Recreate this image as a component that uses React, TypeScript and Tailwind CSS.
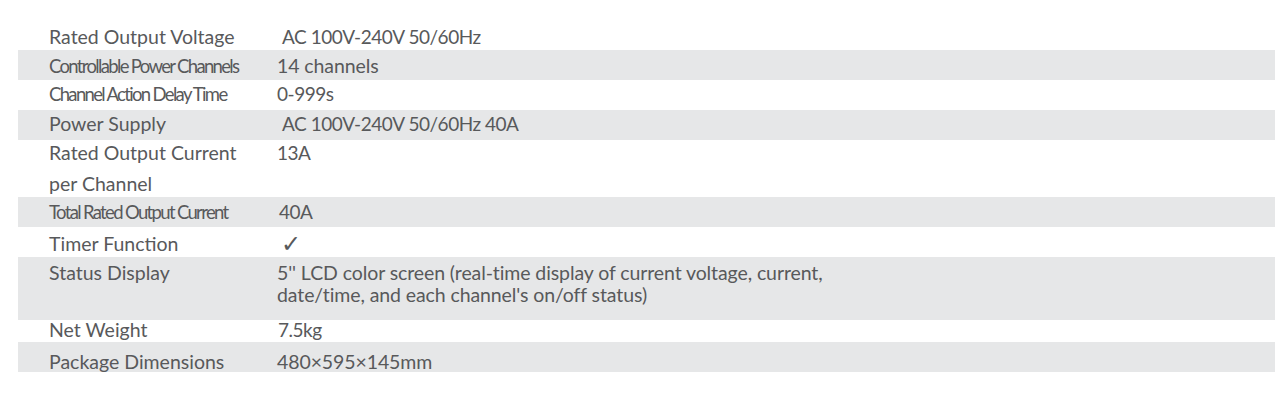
import React from "react";

type Row = {
  label: React.ReactNode;
  value: React.ReactNode;
  gray: boolean;
  h: string;
  pt: string;
  lh?: string;
  condensed?: boolean;
  vpad?: string;
  wide?: boolean;
};

const rows: Row[] = [
  { label: "Rated Output Voltage", value: "AC 100V-240V 50/60Hz", gray: false, h: "h-[30px]", pt: "pt-[5px]", vpad: "pl-[5px]" },
  { label: "Controllable Power Channels", value: "14 channels", gray: true, h: "h-[30px]", pt: "pt-[4px]", condensed: true, wide: true },
  { label: "Channel Action Delay Time", value: "0-999s", gray: false, h: "h-[30px]", pt: "pt-[2px]", condensed: true },
  { label: "Power Supply", value: "AC 100V-240V 50/60Hz 40A", gray: true, h: "h-[30px]", pt: "pt-[2px]", vpad: "pl-[5px]" },
  {
    label: (
      <>
        Rated Output Current
        <br />
        per Channel
      </>
    ),
    value: "13A",
    gray: false,
    h: "h-[57px]",
    pt: "-mt-[3px]",
    lh: "leading-[31px]",
  },
  { label: "Total Rated Output Current", value: "40A", gray: true, h: "h-[30px]", pt: "pt-[3px]", condensed: true, vpad: "pl-[2px]" },
  {
    label: "Timer Function",
    value: (
      <span className="text-[24px] leading-[24px]" style={{ fontFamily: "'DejaVu Sans', sans-serif" }}>
        ✓
      </span>
    ),
    gray: false,
    h: "h-[30px]",
    pt: "pt-[5px]",
    vpad: "pl-[4px]",
  },
  {
    label: "Status Display",
    value: (
      <>
        5'' LCD color screen (real-time display of current voltage, current,
        <br />
        date/time, and each channel's on/off status)
      </>
    ),
    gray: true,
    h: "h-[63px]",
    pt: "pt-[5px]",
    lh: "leading-[22px]",
    wide: true,
  },
  { label: "Net Weight", value: "7.5kg", gray: false, h: "h-[22px]", pt: "-mt-[2px]", vpad: "pl-[1px]" },
  { label: "Package Dimensions", value: "480×595×145mm", gray: true, h: "h-[30px]", pt: "pt-[8px]", wide: true },
];

export default function App() {
  return (
    <div
      className="w-[1280px] h-[409px] bg-white pt-[20px] text-[#58595b]"
      style={{ fontFamily: "Lato, 'Open Sans', sans-serif" }}
    >
      <div className="ml-[18px] w-[1257px] flex flex-col">
        {rows.map((r, i) => (
          <div
            key={i}
            className={`${r.h} ${r.gray ? "bg-[#e6e7e8]" : "bg-white"} flex items-start ${r.lh ?? "leading-[24px]"} overflow-visible`}
          >
            <div
              className={`${r.pt} w-[259px] pl-[31px] flex-none whitespace-nowrap ${
                r.condensed ? "tracking-[-0.09em] text-[18.5px]" : "text-[19.5px]"
              }`}
            >
              {r.label}
            </div>
            <div
              className={`${r.pt} ${r.vpad ?? ""} whitespace-nowrap ${
                r.wide ? "text-[19.5px] tracking-[-0.005em]" : "text-[19px] tracking-[-0.025em]"
              }`}
            >
              {r.value}
            </div>
          </div>
        ))}
      </div>
    </div>
  );
}
